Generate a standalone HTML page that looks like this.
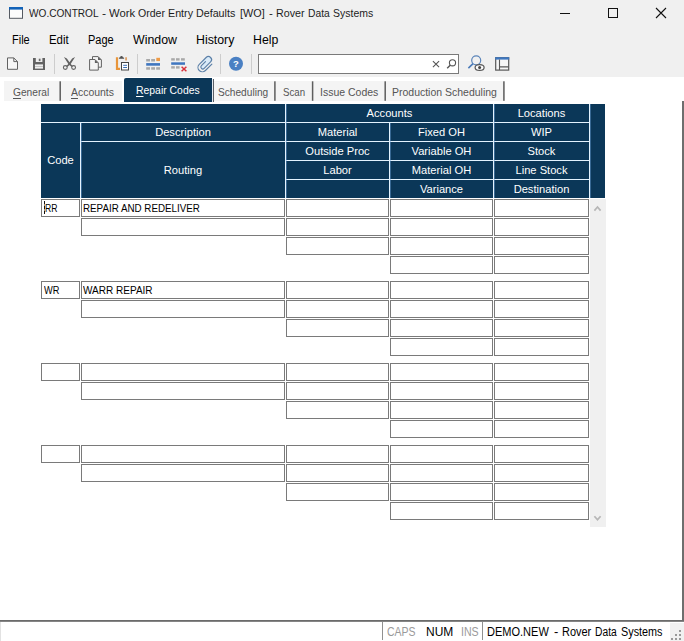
<!DOCTYPE html>
<html><head><meta charset="utf-8"><title>WO.CONTROL</title>
<style>
html,body{margin:0;padding:0;}
body{width:684px;height:641px;overflow:hidden;background:#fff;position:relative;font-family:"Liberation Sans",sans-serif;font-size:12px;color:#000;}
.abs{position:absolute;}
.t{position:absolute;white-space:nowrap;line-height:14px;height:14px;}
#chrome{position:absolute;left:0;top:0;width:684px;height:77px;background:#f0f0f0;}
.sep{position:absolute;width:1px;background:#cdcdcd;top:54px;height:20px;}
.tsep{position:absolute;width:2px;background:#6a6a6a;top:82px;height:19px;}
u{text-decoration-thickness:1px;text-underline-offset:2px;}
.hc{position:absolute;background:#0b3758;color:#fff;}
.in{position:absolute;box-sizing:border-box;border:1px solid #7a7a7a;background:#fff;height:18px;}
</style></head>
<body>
<div id="chrome"></div>
<svg class="abs" style="left:8px;top:6px" width="17" height="14" viewBox="8 6 17 14">
<rect x="9.5" y="7.5" width="13" height="10.8" fill="#fcfcfc" stroke="#555a62" stroke-width="1"/>
<rect x="9" y="7" width="14" height="2.6" fill="#1262b8"/></svg>
<div class="t" style="left:28.60px;top:6.02px;font-size:11.2px;color:#1c1c1c;transform:scaleX(0.903);transform-origin:0 0;">WO.CONTROL</div>
<div class="t" style="left:102.00px;top:6.02px;font-size:11.2px;color:#1c1c1c;transform:scaleX(1.0979);transform-origin:0 0;">-</div>
<div class="t" style="left:108.60px;top:6.02px;font-size:11.2px;color:#1c1c1c;transform:scaleX(1.0075);transform-origin:0 0;">Work</div>
<div class="t" style="left:137.80px;top:6.02px;font-size:11.2px;color:#1c1c1c;transform:scaleX(0.9437);transform-origin:0 0;">Order</div>
<div class="t" style="left:167.80px;top:6.02px;font-size:11.2px;color:#1c1c1c;transform:scaleX(0.9569);transform-origin:0 0;">Entry</div>
<div class="t" style="left:196.20px;top:6.02px;font-size:11.2px;color:#1c1c1c;transform:scaleX(0.9574);transform-origin:0 0;">Defaults</div>
<div class="t" style="left:239.70px;top:6.02px;font-size:11.2px;color:#1c1c1c;transform:scaleX(0.9692);transform-origin:0 0;">[WO]</div>
<div class="t" style="left:269.00px;top:6.02px;font-size:11.2px;color:#1c1c1c;transform:scaleX(1.0176);transform-origin:0 0;">-</div>
<div class="t" style="left:275.50px;top:6.02px;font-size:11.2px;color:#1c1c1c;transform:scaleX(0.955);transform-origin:0 0;">Rover</div>
<div class="t" style="left:308.00px;top:6.02px;font-size:11.2px;color:#1c1c1c;transform:scaleX(0.9179);transform-origin:0 0;">Data</div>
<div class="t" style="left:333.10px;top:6.02px;font-size:11.2px;color:#1c1c1c;transform:scaleX(0.9369);transform-origin:0 0;">Systems</div>
<svg class="abs" style="left:540px;top:0" width="144" height="28" viewBox="0 0 144 28">
<path d="M20 13.5h10" stroke="#111" stroke-width="1" fill="none"/>
<rect x="68.5" y="8.5" width="9" height="9" stroke="#111" stroke-width="1" fill="none"/>
<path d="M116 8l10 10M126 8l-10 10" stroke="#111" stroke-width="1.1" fill="none"/></svg>
<div class="t" style="left:12.30px;top:32.54px;font-size:12px;color:#000;transform:scaleX(0.915);transform-origin:0 0;">File</div>
<div class="t" style="left:49.20px;top:32.54px;font-size:12px;color:#000;transform:scaleX(0.9523);transform-origin:0 0;">Edit</div>
<div class="t" style="left:88.20px;top:32.54px;font-size:12px;color:#000;transform:scaleX(0.9168);transform-origin:0 0;">Page</div>
<div class="t" style="left:133.00px;top:32.54px;font-size:12px;color:#000;transform:scaleX(1.0307);transform-origin:0 0;">Window</div>
<div class="t" style="left:195.70px;top:32.54px;font-size:12px;color:#000;transform:scaleX(1.0283);transform-origin:0 0;">History</div>
<div class="t" style="left:252.70px;top:32.54px;font-size:12px;color:#000;transform:scaleX(1.0248);transform-origin:0 0;">Help</div>
<div class="abs" style="left:258px;top:54px;width:201px;height:20px;box-sizing:border-box;border:1px solid #7a7a7a;background:#fff"></div>
<svg class="abs" style="left:0;top:50px" width="684" height="28" viewBox="0 50 684 28" fill="none">
<!-- new -->
<path d="M7.5 57.9h6.3l3.7 3.7v7.7h-10z" fill="#f7f7f7" stroke="#626262" stroke-width="1"/>
<path d="M13.8 57.9v3.7h3.7" stroke="#626262" stroke-width="1"/>
<!-- save -->
<path d="M33 58h12v12h-12z" fill="#626262"/>
<rect x="35.8" y="58" width="6.6" height="4" fill="#ededed"/>
<rect x="38.8" y="58.7" width="1.7" height="2.4" fill="#6a6a6a"/>
<rect x="35" y="64.4" width="8" height="4.2" fill="#efefef"/>
<rect x="35" y="66" width="8" height="1" fill="#c4c4c4"/>
<!-- scissors -->
<circle cx="65.3" cy="67.5" r="1.9" stroke="#626262" stroke-width="1.1" fill="#f0f0f0"/>
<circle cx="73.6" cy="67.5" r="1.9" stroke="#626262" stroke-width="1.1" fill="#f0f0f0"/>
<path d="M63.9 57l3 1.4 3.8 5.6 2 2.1-1 .8-3.2-2.6z" fill="#626262"/>
<path d="M75.1 57l-3 1.4-3.8 5.6-2 2.1 1 .8 3.2-2.6z" fill="#626262"/>
<!-- copy -->
<path d="M92.5 56.6h5.6l3.3 3.3v7.3h-8.9z" fill="#f4f4f4" stroke="#626262" stroke-width="1"/>
<path d="M98 56.6v3.4h3.4z" fill="#626262"/>
<path d="M89.6 59.5h5.4l3.3 3.3v7.3h-8.7z" fill="#f4f4f4" stroke="#626262" stroke-width="1"/>
<path d="M94.9 59.5v3.4h3.4z" fill="#626262"/>
<!-- paste -->
<path d="M117 57.2v11.6h3" stroke="#e8953a" stroke-width="2.2"/>
<path d="M126.1 57.2v3.3" stroke="#e0a36a" stroke-width="1.8"/>
<path d="M118.9 58.7v-.9q.6-.3 1.3-.5 0-1.3 1.3-1.3t1.3 1.3q.7.2 1.3.5v.9z" fill="#505050"/>
<rect x="121.5" y="62.5" width="7" height="7.5" fill="#fff" stroke="#454545" stroke-width="1"/>
<path d="M123.2 65.3h3.8M123.2 67.5h3.8" stroke="#3b6fb5" stroke-width="1"/>
<!-- insert row -->
<g fill="#a9a9a9"><rect x="146.2" y="59" width="3.8" height="2.5"/><rect x="151.2" y="59" width="3.8" height="2.5"/>
<rect x="146.2" y="67.2" width="3.8" height="2.5"/><rect x="151.2" y="67.2" width="3.8" height="2.5"/><rect x="156.2" y="67.2" width="3.8" height="2.5"/></g>
<rect x="156.3" y="57.8" width="3.7" height="3.3" fill="#ee9a45"/>
<rect x="146.2" y="63.1" width="13.8" height="2.6" fill="#3f76bf"/>
<!-- delete row -->
<g fill="#a9a9a9"><rect x="171.2" y="58.2" width="3.6" height="2.4"/><rect x="176" y="58.2" width="3.6" height="2.4"/><rect x="181" y="58.2" width="3.8" height="2.4"/>
<rect x="171.2" y="66.2" width="3.6" height="2.4"/><rect x="176" y="66.2" width="3.6" height="2.4"/></g>
<rect x="171.2" y="62.3" width="13.8" height="2.5" fill="#3f76bf"/>
<path d="M181.6 66.7l4.8 4.6M186.4 66.7l-4.8 4.6" stroke="#d8323c" stroke-width="1.5"/>
<!-- paperclip -->
<g transform="translate(205 64) rotate(45)"><path d="M-3.8 4.3V-5.4A3.15 3.15 0 0 1 2.5-5.4V3.7A1.92 1.92 0 0 1-1.34 3.7V-2z" fill="#d9eaf8" stroke="none"/>
<path d="M4.9-4.79V4.3A4.35 4.35 0 0 1-3.8 4.3V-5.4A3.15 3.15 0 0 1 2.5-5.4V3.7A1.92 1.92 0 0 1-1.34 3.7V-2.05" stroke="#5c80a8" stroke-width="1.15" stroke-linecap="round"/></g>
<!-- help -->
<circle cx="236" cy="63.8" r="7" fill="#4a80c3"/>
<text x="236" y="67.3" font-family="Liberation Sans, sans-serif" font-weight="bold" font-size="9.5" fill="#fff" text-anchor="middle">?</text>
<!-- clear x -->
<path d="M432.9 61.1l6.2 6M439.1 61.1l-6.2 6" stroke="#555" stroke-width="1.1"/>
<!-- search -->
<circle cx="452.5" cy="62.8" r="3.1" stroke="#555" stroke-width="1.1"/>
<path d="M450.2 65.2l-3 3" stroke="#555" stroke-width="1.4"/>
<!-- find eye -->
<circle cx="476.2" cy="60.3" r="4.5" stroke="#5a84b9" stroke-width="1.2"/>
<path d="M473 63.7l-4.6 4.4" stroke="#4a7ab8" stroke-width="1.6"/>
<ellipse cx="479.6" cy="67.5" rx="4.5" ry="2.9" fill="#fbfbfb" stroke="#555" stroke-width="1.2"/>
<circle cx="479.6" cy="67.5" r="1.5" fill="#444"/>
<!-- layout -->
<rect x="495.7" y="57.7" width="13" height="12.4" fill="#f6f6f6" stroke="#585858" stroke-width="1.2"/>
<rect x="495.2" y="57.2" width="14" height="2.4" fill="#3f78c0"/>
<path d="M499.5 59.6v10.5M499.5 66.9h9.2" stroke="#585858" stroke-width="1.1"/>
</svg>
<div class="sep" style="left:54px"></div>
<div class="sep" style="left:137px"></div>
<div class="sep" style="left:220px"></div>
<div class="sep" style="left:251px"></div>
<div class="abs" style="left:4px;top:81px;width:118px;height:20px;background:#f4f4f4"></div>
<div class="abs" style="left:214px;top:81px;width:291px;height:20px;background:#f4f4f4"></div>
<div class="abs" style="left:124px;top:78px;width:88px;height:24px;background:#0b3758;border-radius:2px 0 0 0"></div>
<div class="abs" style="left:212px;top:79px;width:1px;height:23px;background:#e3e9f0"></div>
<div class="abs" style="left:213px;top:79px;width:1px;height:23px;background:#5a5f66"></div>
<svg class="abs" style="left:0;top:78px" width="684" height="26" viewBox="0 78 684 26" fill="#5e5e5e"><rect x="59.45" y="81.3" width="1.5" height="19.5"/><rect x="274.15" y="81.3" width="1.5" height="19.5"/><rect x="311.85" y="81.3" width="1.5" height="19.5"/><rect x="384.45" y="81.3" width="1.5" height="19.5"/><rect x="503.15" y="81.3" width="1.5" height="19.5"/></svg>
<div class="t" style="left:12.70px;top:84.72px;font-size:11.5px;color:#555;transform:scaleX(0.8871);transform-origin:0 0;"><u>G</u>eneral</div>
<div class="t" style="left:71.20px;top:84.72px;font-size:11.5px;color:#555;transform:scaleX(0.9089);transform-origin:0 0;"><u>A</u>ccounts</div>
<div class="t" style="left:135.80px;top:83.02px;font-size:11.5px;color:#fff;transform:scaleX(0.9058);transform-origin:0 0;"><u>R</u>epair Codes</div>
<div class="t" style="left:217.60px;top:84.72px;font-size:11.5px;color:#555;transform:scaleX(0.8822);transform-origin:0 0;">Scheduling</div>
<div class="t" style="left:282.80px;top:84.72px;font-size:11.5px;color:#555;transform:scaleX(0.8429);transform-origin:0 0;">Scan</div>
<div class="t" style="left:320.00px;top:84.72px;font-size:11.5px;color:#555;transform:scaleX(0.9118);transform-origin:0 0;">Issue Codes</div>
<div class="t" style="left:392.40px;top:84.72px;font-size:11.5px;color:#555;transform:scaleX(0.9114);transform-origin:0 0;">Production Scheduling</div>
<div class="abs" style="left:682px;top:101px;width:2px;height:521px;background:#6e6e6e"></div>
<div class="abs" style="left:0;top:620px;width:684px;height:1px;background:#6b6b6b"></div>
<div class="abs" style="left:0;top:621px;width:684px;height:1px;background:#858585"></div>
<div class="abs" style="left:41px;top:104px;width:564px;height:94px;background:#e4f3ff"></div>
<div class="hc" style="left:41px;top:104px;width:244px;height:18px"></div>
<div class="hc" style="left:41px;top:123px;width:39px;height:75px"></div>
<div class="hc" style="left:81px;top:123px;width:204px;height:18px"></div>
<div class="hc" style="left:81px;top:142px;width:204px;height:56px"></div>
<div class="hc" style="left:286px;top:104px;width:207px;height:18px"></div>
<div class="hc" style="left:494px;top:104px;width:95px;height:18px"></div>
<div class="hc" style="left:590px;top:104px;width:15px;height:94px"></div>
<div class="hc" style="left:286px;top:123px;width:103px;height:18px"></div>
<div class="hc" style="left:390px;top:123px;width:103px;height:18px"></div>
<div class="hc" style="left:494px;top:123px;width:95px;height:18px"></div>
<div class="hc" style="left:286px;top:142px;width:103px;height:18px"></div>
<div class="hc" style="left:390px;top:142px;width:103px;height:18px"></div>
<div class="hc" style="left:494px;top:142px;width:95px;height:18px"></div>
<div class="hc" style="left:286px;top:161px;width:103px;height:18px"></div>
<div class="hc" style="left:390px;top:161px;width:103px;height:18px"></div>
<div class="hc" style="left:494px;top:161px;width:95px;height:18px"></div>
<div class="hc" style="left:286px;top:180px;width:103px;height:18px"></div>
<div class="hc" style="left:390px;top:180px;width:103px;height:18px"></div>
<div class="hc" style="left:494px;top:180px;width:95px;height:18px"></div>
<div class="abs" style="left:81px;top:123px;width:1px;height:75px;background:rgba(110,165,220,.45)"></div>
<div class="abs" style="left:286px;top:104px;width:1px;height:94px;background:rgba(110,165,220,.45)"></div>
<div class="abs" style="left:390px;top:123px;width:1px;height:75px;background:rgba(110,165,220,.45)"></div>
<div class="abs" style="left:494px;top:104px;width:1px;height:94px;background:rgba(110,165,220,.45)"></div>
<div class="abs" style="left:590px;top:104px;width:1px;height:94px;background:rgba(110,165,220,.45)"></div>
<div class="t" style="left:-39.5px;width:200px;text-align:center;top:153.34px;font-size:11.15px;color:#fff">Code</div>
<div class="t" style="left:83.0px;width:200px;text-align:center;top:124.84px;font-size:11.15px;color:#fff">Description</div>
<div class="t" style="left:83.0px;width:200px;text-align:center;top:162.84px;font-size:11.15px;color:#fff">Routing</div>
<div class="t" style="left:289.5px;width:200px;text-align:center;top:105.84px;font-size:11.15px;color:#fff">Accounts</div>
<div class="t" style="left:441.5px;width:200px;text-align:center;top:105.84px;font-size:11.15px;color:#fff">Locations</div>
<div class="t" style="left:237.5px;width:200px;text-align:center;top:124.84px;font-size:11.15px;color:#fff">Material</div>
<div class="t" style="left:341.5px;width:200px;text-align:center;top:124.84px;font-size:11.15px;color:#fff">Fixed OH</div>
<div class="t" style="left:441.5px;width:200px;text-align:center;top:124.84px;font-size:11.15px;color:#fff">WIP</div>
<div class="t" style="left:237.5px;width:200px;text-align:center;top:143.84px;font-size:11.15px;color:#fff">Outside Proc</div>
<div class="t" style="left:341.5px;width:200px;text-align:center;top:143.84px;font-size:11.15px;color:#fff">Variable OH</div>
<div class="t" style="left:441.5px;width:200px;text-align:center;top:143.84px;font-size:11.15px;color:#fff">Stock</div>
<div class="t" style="left:237.5px;width:200px;text-align:center;top:162.84px;font-size:11.15px;color:#fff">Labor</div>
<div class="t" style="left:341.5px;width:200px;text-align:center;top:162.84px;font-size:11.15px;color:#fff">Material OH</div>
<div class="t" style="left:441.5px;width:200px;text-align:center;top:162.84px;font-size:11.15px;color:#fff">Line Stock</div>
<div class="t" style="left:341.5px;width:200px;text-align:center;top:181.84px;font-size:11.15px;color:#fff">Variance</div>
<div class="t" style="left:441.5px;width:200px;text-align:center;top:181.84px;font-size:11.15px;color:#fff">Destination</div>
<div class="in" style="left:41px;top:199px;width:39px"></div>
<div class="in" style="left:81px;top:199px;width:204px"></div>
<div class="in" style="left:81px;top:218px;width:204px"></div>
<div class="in" style="left:286px;top:199px;width:103px"></div>
<div class="in" style="left:286px;top:218px;width:103px"></div>
<div class="in" style="left:286px;top:237px;width:103px"></div>
<div class="in" style="left:390px;top:199px;width:103px"></div>
<div class="in" style="left:494px;top:199px;width:95px"></div>
<div class="in" style="left:390px;top:218px;width:103px"></div>
<div class="in" style="left:494px;top:218px;width:95px"></div>
<div class="in" style="left:390px;top:237px;width:103px"></div>
<div class="in" style="left:494px;top:237px;width:95px"></div>
<div class="in" style="left:390px;top:256px;width:103px"></div>
<div class="in" style="left:494px;top:256px;width:95px"></div>
<div class="in" style="left:41px;top:281px;width:39px"></div>
<div class="in" style="left:81px;top:281px;width:204px"></div>
<div class="in" style="left:81px;top:300px;width:204px"></div>
<div class="in" style="left:286px;top:281px;width:103px"></div>
<div class="in" style="left:286px;top:300px;width:103px"></div>
<div class="in" style="left:286px;top:319px;width:103px"></div>
<div class="in" style="left:390px;top:281px;width:103px"></div>
<div class="in" style="left:494px;top:281px;width:95px"></div>
<div class="in" style="left:390px;top:300px;width:103px"></div>
<div class="in" style="left:494px;top:300px;width:95px"></div>
<div class="in" style="left:390px;top:319px;width:103px"></div>
<div class="in" style="left:494px;top:319px;width:95px"></div>
<div class="in" style="left:390px;top:338px;width:103px"></div>
<div class="in" style="left:494px;top:338px;width:95px"></div>
<div class="in" style="left:41px;top:363px;width:39px"></div>
<div class="in" style="left:81px;top:363px;width:204px"></div>
<div class="in" style="left:81px;top:382px;width:204px"></div>
<div class="in" style="left:286px;top:363px;width:103px"></div>
<div class="in" style="left:286px;top:382px;width:103px"></div>
<div class="in" style="left:286px;top:401px;width:103px"></div>
<div class="in" style="left:390px;top:363px;width:103px"></div>
<div class="in" style="left:494px;top:363px;width:95px"></div>
<div class="in" style="left:390px;top:382px;width:103px"></div>
<div class="in" style="left:494px;top:382px;width:95px"></div>
<div class="in" style="left:390px;top:401px;width:103px"></div>
<div class="in" style="left:494px;top:401px;width:95px"></div>
<div class="in" style="left:390px;top:420px;width:103px"></div>
<div class="in" style="left:494px;top:420px;width:95px"></div>
<div class="in" style="left:41px;top:445px;width:39px"></div>
<div class="in" style="left:81px;top:445px;width:204px"></div>
<div class="in" style="left:81px;top:464px;width:204px"></div>
<div class="in" style="left:286px;top:445px;width:103px"></div>
<div class="in" style="left:286px;top:464px;width:103px"></div>
<div class="in" style="left:286px;top:483px;width:103px"></div>
<div class="in" style="left:390px;top:445px;width:103px"></div>
<div class="in" style="left:494px;top:445px;width:95px"></div>
<div class="in" style="left:390px;top:464px;width:103px"></div>
<div class="in" style="left:494px;top:464px;width:95px"></div>
<div class="in" style="left:390px;top:483px;width:103px"></div>
<div class="in" style="left:494px;top:483px;width:95px"></div>
<div class="in" style="left:390px;top:502px;width:103px"></div>
<div class="in" style="left:494px;top:502px;width:95px"></div>
<div class="t" style="left:44.60px;top:201.22px;font-size:11.5px;color:#000;transform:scaleX(0.7519);transform-origin:0 0;">RR</div>
<div class="t" style="left:83.30px;top:201.22px;font-size:11.5px;color:#000;transform:scaleX(0.8521);transform-origin:0 0;">REPAIR AND REDELIVER</div>
<div class="t" style="left:44.20px;top:283.22px;font-size:11.5px;color:#000;transform:scaleX(0.8033);transform-origin:0 0;">WR</div>
<div class="t" style="left:83.30px;top:283.22px;font-size:11.5px;color:#000;transform:scaleX(0.8714);transform-origin:0 0;">WARR REPAIR</div>
<div class="abs" style="left:44px;top:201px;width:1px;height:13px;background:repeating-linear-gradient(#111 0 3px,#8a8a8a 3px 5px)"></div>
<div class="abs" style="left:590px;top:199px;width:16px;height:328px;background:#f0f0f0"></div>
<svg class="abs" style="left:590px;top:199px" width="16" height="327" viewBox="590 199 16 327" fill="none">
<path d="M594.4 210.6L597.5 207l3.1 3.6" stroke="#b6b6b6" stroke-width="1.7"/>
<path d="M594.4 516.2L597.5 519.8l3.1-3.6" stroke="#b6b6b6" stroke-width="1.7"/></svg>
<div class="abs" style="left:0;top:622px;width:684px;height:19px;background:#fff"></div>
<div class="abs" style="left:0;top:622px;width:1px;height:19px;background:#e2e2e2"></div>
<div class="abs" style="left:382px;top:622px;width:1px;height:18px;background:#909090"></div>
<div class="abs" style="left:482px;top:622px;width:1px;height:18px;background:#909090"></div>
<div class="t" style="left:387.40px;top:624.54px;font-size:12px;color:#9a9a9a;transform:scaleX(0.875);transform-origin:0 0;">CAPS</div>
<div class="t" style="left:425.50px;top:624.54px;font-size:12px;color:#000;transform:scaleX(0.999);transform-origin:0 0;">NUM</div>
<div class="t" style="left:460.50px;top:624.54px;font-size:12px;color:#9a9a9a;transform:scaleX(0.8843);transform-origin:0 0;">INS</div>
<div class="t" style="left:487.10px;top:624.54px;font-size:12px;color:#000;transform:scaleX(0.9177);transform-origin:0 0;">DEMO.NEW</div>
<div class="t" style="left:553.50px;top:624.54px;font-size:12px;color:#000;transform:scaleX(1.075);transform-origin:0 0;">-</div>
<div class="t" style="left:561.50px;top:624.54px;font-size:12px;color:#000;transform:scaleX(0.9121);transform-origin:0 0;">Rover</div>
<div class="t" style="left:595.20px;top:624.54px;font-size:12px;color:#000;transform:scaleX(0.8557);transform-origin:0 0;">Data</div>
<div class="t" style="left:621.20px;top:624.54px;font-size:12px;color:#000;transform:scaleX(0.9019);transform-origin:0 0;">Systems</div>
<div class="abs" style="left:670px;top:623px;width:14px;height:18px;background:#f1f1f1"></div>
<svg class="abs" style="left:670px;top:623px" width="14" height="18" viewBox="670 623 14 18" fill="#999"><rect x="679" y="630" width="2" height="2"/><rect x="675" y="634" width="2" height="2"/><rect x="679" y="634" width="2" height="2"/><rect x="671" y="638" width="2" height="2"/><rect x="675" y="638" width="2" height="2"/><rect x="679" y="638" width="2" height="2"/></svg>
</body></html>
